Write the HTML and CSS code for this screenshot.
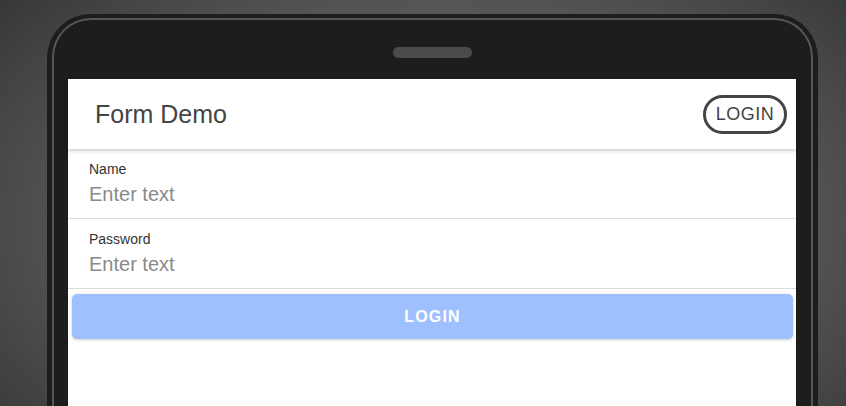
FILE: index.html
```html
<!DOCTYPE html>
<html lang="en">
<head>
    <meta charset="UTF-8">
    <meta name="viewport" content="width=device-width, initial-scale=1.0">
    <title>Form Demo</title>
    <link rel="stylesheet" href="styles.css">
</head>
<body>
    <div class="device">
        <div class="bezel">
            <div class="speaker"></div>
            <div class="screen">
                <header class="toolbar">
                    <h1 class="toolbar-title">Form Demo</h1>
                    <button class="outline-button" type="button">LOGIN</button>
                </header>
                <form class="login-form">
                    <label class="field">
                        <span class="field-label">Name</span>
                        <input class="field-input" type="text" placeholder="Enter text">
                    </label>
                    <label class="field">
                        <span class="field-label">Password</span>
                        <input class="field-input" type="password" placeholder="Enter text">
                    </label>
                    <button class="submit-button" type="submit" disabled>LOGIN</button>
                </form>
            </div>
        </div>
    </div>
</body>
</html>
```

FILE: styles.css
```css
html, body {
    height: 100%;
}
body {
    margin: 0;
    overflow: hidden;
    font-family: "Liberation Sans", Arial, sans-serif;
    background: radial-gradient(ellipse 75% 95% at 52% 55%, #5e5f5e 45%, #2e302f 100%);
}
.device {
    width: 771px;
    height: 420px;
    margin: 14px 0 0 47px;
    padding: 4px 5px 0;
    box-sizing: border-box;
    background-color: #1d1d1d;
    border-radius: 44px 44px 0 0;
}
.bezel {
    height: 100%;
    box-sizing: border-box;
    padding: 27px 15px 0 14px;
    border: 2px solid #575757;
    border-bottom: none;
    border-radius: 39px 39px 0 0;
    display: flex;
    flex-direction: column;
}
.speaker {
    width: 79px;
    height: 11px;
    margin: 0 auto 21px;
    background-color: #4b4b4b;
    border-radius: 6px;
}
.screen {
    flex: 1;
    background-color: #fff;
}
.toolbar {
    height: 70px;
    padding: 0 9px 0 27px;
    display: flex;
    align-items: center;
    justify-content: space-between;
    box-shadow: 0 2px 4px rgba(0, 0, 0, 0.2);
    position: relative;
}
.toolbar-title {
    margin: 0;
    font-size: 25px;
    font-weight: normal;
    color: #444;
}
.outline-button {
    width: 84px;
    height: 39px;
    padding: 0;
    font-family: inherit;
    font-size: 18px;
    letter-spacing: 0.5px;
    color: #444;
    background: #fff;
    border: 3px solid #444;
    border-radius: 20px;
}
.field {
    display: flex;
    flex-direction: column;
    gap: 5px;
    padding: 12px 21px;
    border-bottom: 1px solid #dcdcdc;
}
.field-label {
    font-size: 14px;
    line-height: 16px;
    color: #333;
}
.field-input {
    padding: 0;
    height: 24px;
    font-family: inherit;
    font-size: 20px;
    line-height: 24px;
    border: none;
    outline: none;
    color: #333;
}
.field-input::placeholder {
    color: #8a8a8a;
}
.submit-button {
    display: block;
    width: 721px;
    height: 45px;
    margin: 5px 0 0 4px;
    font-family: inherit;
    font-size: 16px;
    font-weight: bold;
    letter-spacing: 1.2px;
    color: #fff;
    background-color: #9ec0ff;
    border: none;
    border-radius: 5px;
    box-shadow: 0 1px 3px rgba(0, 0, 0, 0.2);
}
```
